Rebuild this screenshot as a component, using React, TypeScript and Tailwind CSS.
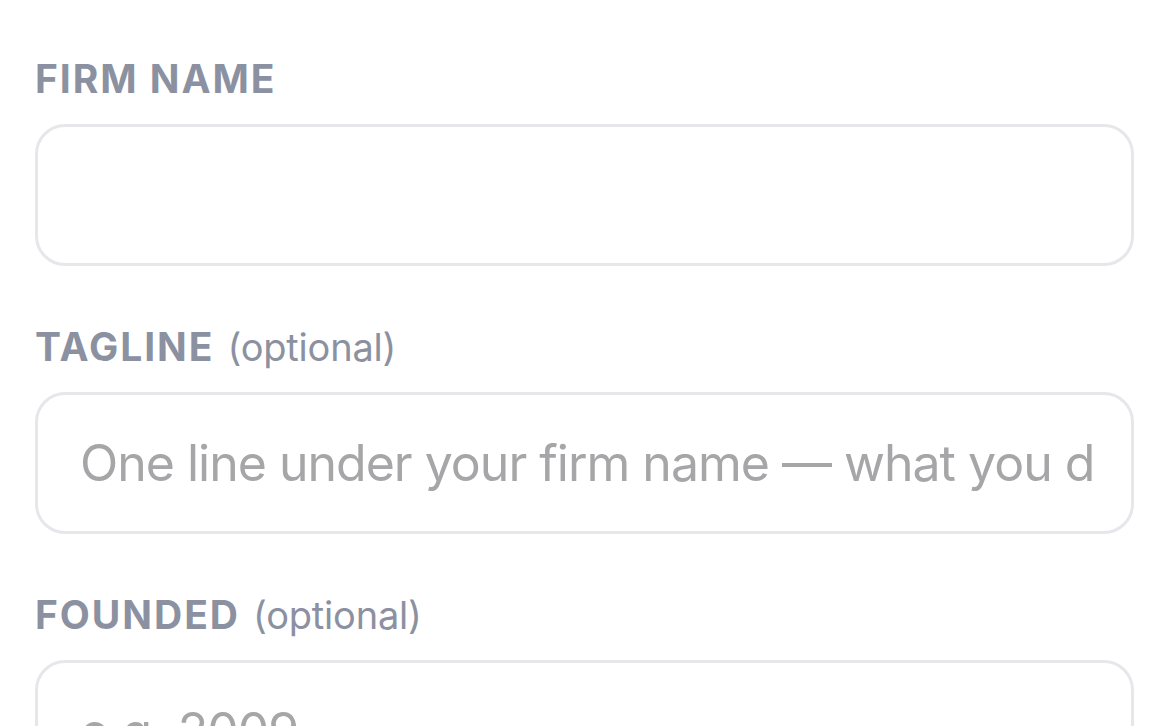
import React from "react";

function Field({ label, optional, placeholder }: { label: string; optional?: boolean; placeholder?: string }) {
  return (
    <div className="flex flex-col gap-[21px]">
      <div className="flex items-baseline gap-[13px] leading-[48px] text-[#8b91a1]">
        <span className="text-[39px] font-bold tracking-[0.05em]">{label}</span>
        {optional && <span className="text-[38px] font-normal tracking-[-0.005em]">(optional)</span>}
      </div>
      <input
        className="h-[142px] w-full rounded-[30px] border-[3px] border-[#e6e7eb] bg-white pl-[42px] pr-[36px] text-[50px] tracking-[-0.02em] text-[#1f2937] outline-none placeholder:text-[#a6a6a8]"
        placeholder={placeholder}
      />
    </div>
  );
}

export default function App() {
  return (
    <div
      className="flex h-[726px] w-full flex-col gap-[57px] overflow-hidden bg-white pl-[35px] pr-[28px] pt-[55px]"
      style={{ fontFamily: "Inter, 'Noto Sans', sans-serif" }}
    >
      <Field label="FIRM NAME" />
      <Field label="TAGLINE" optional placeholder="One line under your firm name — what you do and who you serve" />
      <Field label="FOUNDED" optional placeholder="e.g. 2009" />
    </div>
  );
}
